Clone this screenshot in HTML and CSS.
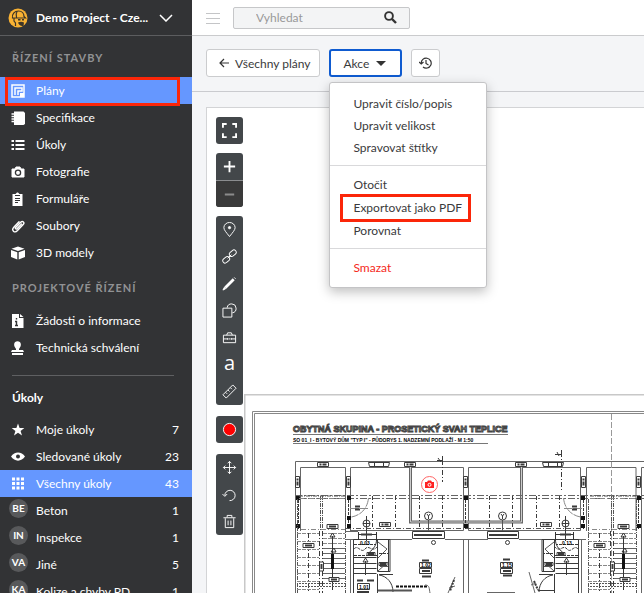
FILE: index.html
```html
<!DOCTYPE html>
<html lang="cs">
<head>
  <meta charset="UTF-8">
  <meta name="viewport" content="width=device-width, initial-scale=1.0">
  <title>Plány - Demo Project</title>
  <link rel="stylesheet" href="styles.css">
</head>
<body>

<aside class="sidebar">
  <button class="project">
    <svg class="logo" width="20" height="20" viewBox="0 0 20 20"><circle cx="10" cy="10" r="9.500" fill="#f9b233"/><path d="M4.500 10.500C3.500 6 6.500 3 10.500 3c3.500 0 5.500 2.500 5.500 5.500l1.500 1.500H5M6 10.500v2.500l1.500 2V18M9 3.500C8 5 8 7 8.500 9.500" fill="none" stroke="#3d3528" stroke-width="1.200"/><path d="M10 11h2.500v1.500H10zM14 11h2v1.500h-2zM10 14.500c2-1 4-1 6 0l-.5 3.500c-3 .5-4.500-1-5.500-3.500z" fill="#3d3528"/></svg>
    <span>Demo Project - Cze...</span>
    <svg width="14" height="8" viewBox="0 0 14 8"><path d="M1 1l6 6 6-6" fill="none" stroke="#fff" stroke-width="1.500"/></svg>
  </button>

  <h2 class="section">Řízení stavby</h2>
  <nav>
    <a href="#" class="item active marked"><svg class="icon" viewBox="0 0 14 14"><path d="M1 1h12v12H1z" fill="none" stroke="#fff" stroke-width="1.500"/><path d="M4 11V4h7v3H7v4" fill="none" stroke="#fff" stroke-width="1.500"/><path d="M9 9h4v4H9z" fill="#fff"/></svg>Plány</a>
    <a href="#" class="item"><svg class="icon" viewBox="0 0 14 14"><path d="M3 .5h9.500L14 2v11l-1.500 1H3z" fill="#fff"/><path d="M.5 3h3M.5 5.500h3M.5 8h3M.5 10.500h3" stroke="#fff" stroke-width="1.300"/></svg>Specifikace</a>
    <a href="#" class="item"><svg class="icon" viewBox="0 0 14 14"><path d="M.5 3H3M4.500 3h9M.5 7H3M4.500 7h9M.5 11H3M4.500 11h9" stroke="#fff" stroke-width="2.200"/></svg>Úkoly</a>
    <a href="#" class="item"><svg class="icon" viewBox="0 0 14 14"><path d="M1 4h3l1-2h4l1 2h3v8H1z" fill="#fff" stroke="#fff" stroke-linejoin="round"/><circle cx="7" cy="7.800" r="2.600" fill="none" stroke="#323335" stroke-width="1.300"/></svg>Fotografie</a>
    <a href="#" class="item"><svg class="icon" viewBox="0 0 14 14"><path d="M1.500 2h3L6 .5h1L8.500 2h3v12h-10z" fill="#fff"/><path d="M4 3.500h5M4 6.500h5M4 8.500h5M4 10.500h3" stroke="#323335"/></svg>Formuláře</a>
    <a href="#" class="item"><svg class="icon" viewBox="0 0 14 14"><path d="M10.500 5L6 9.700c-1 1-2.200-.2-1.300-1.200l5-5.200c2-2 4.300.3 2.500 2.300l-5.700 6c-3 3-6.500-.4-3.700-3.400L8 2.800" fill="none" stroke="#fff" stroke-width="1.400" stroke-linecap="round"/></svg>Soubory</a>
    <a href="#" class="item"><svg class="icon" viewBox="0 0 14 14"><path d="M7 .5l6.500 2.300L7 5 .5 2.800zM0 4l6.300 2.200v7.300L0 11zM14 4L7.700 6.200v7.300L14 11z" fill="#fff"/></svg>3D modely</a>
  </nav>

  <h2 class="section">Projektové řízení</h2>
  <nav>
    <a href="#" class="item"><svg class="icon" viewBox="0 0 14 14"><path d="M1 0h7v4h4.500v10H1z" fill="#fff"/><path d="M9 0l3.500 3H9z" fill="#fff"/><path d="M5.500 4v1.500M4 7.500h1.500V11M4 11.500h3" stroke="#323335" stroke-width="1.400" fill="none"/></svg>Žádosti o informace</a>
    <a href="#" class="item"><svg class="icon" viewBox="0 0 14 14"><path d="M5 8L3.500 5.500C1-1.500 12-1.500 9.500 5.500L8 8v1h4l1 2H0l1-2h4zM1 12h11v2H1z" fill="#fff"/></svg>Technická schválení</a>
  </nav>

  <hr>
  <h2 class="tasks-title">Úkoly</h2>
  <nav>
    <a href="#" class="item"><svg class="icon" viewBox="0 0 14 14"><path d="M7 .5l1.600 4.500h4.700L9.600 7.900l1.400 4.600-4-2.800-4 2.800 1.400-4.600L.7 5h4.700z" fill="#fff"/></svg>Moje úkoly<span class="count">7</span></a>
    <a href="#" class="item"><svg class="icon" viewBox="0 0 14 14"><path d="M0 6.500C3.500 1 10.500 1 14 6.500 10.500 12 3.500 12 0 6.500z" fill="#fff"/><circle cx="7" cy="6.500" r="2" fill="#323335"/></svg>Sledované úkoly<span class="count">23</span></a>
    <a href="#" class="item active"><svg class="icon" viewBox="0 0 14 14"><path d="M1 2h3M5.500 2h3M10 2h3M1 6.500h3M5.500 6.500h3M10 6.500h3M1 11h3M5.500 11h3M10 11h3" stroke="#fff" stroke-width="3"/></svg>Všechny úkoly<span class="count">43</span></a>
    <a href="#" class="item"><span class="badge">BE</span>Beton<span class="count">1</span></a>
    <a href="#" class="item"><span class="badge">IN</span>Inspekce<span class="count">1</span></a>
    <a href="#" class="item"><span class="badge">VA</span>Jiné<span class="count">5</span></a>
    <a href="#" class="item"><span class="badge">KA</span>Kolize a chyby PD<span class="count">1</span></a>
  </nav>
</aside>

<main class="main">
  <header class="topbar">
    <button class="burger" aria-label="Menu"><svg width="14" height="12" viewBox="0 0 14 12"><path d="M0 1.500h14M0 6.500h14M0 11.500h14" stroke="#c4c5c7"/></svg></button>
    <label class="search">
      <input type="text" placeholder="Vyhledat" aria-label="Vyhledat">
      <svg width="13" height="13" viewBox="0 0 13 13"><circle cx="5" cy="5" r="3.900" fill="none" stroke="#333" stroke-width="1.900"/><path d="M8 8l4 4" stroke="#333" stroke-width="2.400"/></svg>
    </label>
  </header>

  <div class="toolbar">
    <button class="btn"><svg width="10" height="10" viewBox="0 0 10 10"><path d="M10 5H1M5 1L1 5l4 4" fill="none" stroke="#333" stroke-width="1.200"/></svg>Všechny plány</button>
    <div class="dropdown">
      <button class="btn focused">Akce<svg width="10" height="5" viewBox="0 0 10 5"><path d="M0 0h10L5 5z" fill="#333"/></svg></button>
      <div class="menu">
        <div class="group">
          <a href="#">Upravit číslo/popis</a>
          <a href="#">Upravit velikost</a>
          <a href="#">Spravovat štítky</a>
        </div>
        <div class="group">
          <a href="#">Otočit</a>
          <a href="#" class="export">Exportovat jako PDF</a>
          <a href="#">Porovnat</a>
        </div>
        <div class="group">
          <a href="#" class="danger">Smazat</a>
        </div>
      </div>
    </div>
    <button class="btn history" aria-label="Historie"><svg width="13" height="12" viewBox="0 0 13 12"><path d="M2.200 6.500A5 5 0 1 1 4 10M0 5l2.200 2L4.500 5M7 3v3.500l2.500 1.500" fill="none" stroke="#333" stroke-width="1.200"/></svg></button>
  </div>

  <section class="canvas">
    <div class="tools">
      <div class="tool-group">
        <button aria-label="Celá obrazovka"><svg viewBox="0 0 16 16"><path d="M1 5V1h4M11 1h4v4M15 11v4h-4M5 15H1v-4" stroke-width="2"/></svg></button>
      </div>
      <div class="tool-group">
        <button aria-label="Přiblížit"><svg viewBox="0 0 16 16"><path d="M8 2v12M2 8h12" stroke-width="2"/></svg></button>
        <button class="off" aria-label="Oddálit"><svg viewBox="0 0 16 16"><path d="M3 8h10" stroke="#8b8b8b" stroke-width="2"/></svg></button>
      </div>
      <div class="tool-group wide">
        <button aria-label="Úkol"><svg viewBox="0 0 16 16"><path d="M8 15.500C4.500 11 2 8.500 2 6a6 5.500 0 0 1 12 0c0 2.500-2.500 5-6 9.500z"/><circle cx="8" cy="6" r="1.200" fill="#fff"/></svg></button>
        <button aria-label="Odkaz"><svg viewBox="0 0 16 16"><rect x="-4" y="-2.500" width="8" height="5" rx="2.500" transform="translate(11.500 4.500) rotate(-40)"/><rect x="-4" y="-2.500" width="8" height="5" rx="2.500" transform="translate(4.500 11.500) rotate(-40)"/><path d="M6 10l4-4"/></svg></button>
        <button aria-label="Tužka"><svg viewBox="0 0 16 16"><path d="M3.500 12.500l9-9" stroke-width="3"/><path d="M1 15l1.500-3 1.500 1.500zM13 1.500l1.500 1.500" fill="#fff"/></svg></button>
        <button aria-label="Tvary"><svg viewBox="0 0 16 16"><path d="M1 5.500h9.500V15H1zM5.500 5a4.800 4.800 0 1 1 5.500 5.500"/></svg></button>
        <button aria-label="Razítko"><svg viewBox="0 0 16 16"><path d="M1.500 5.500h13v8h-13zM5 5.500L6 3h4l1 2.500M1.500 9.500h4M7 9.500h2M10.500 9.500h4M6 8.500v2M10 8.500v2"/></svg></button>
        <button class="letter" aria-label="Text">a</button>
        <button aria-label="Měřit"><svg viewBox="0 0 16 16"><path d="M1 11.500L11.500 1 15 4.500 4.500 15zM4 9l1.500 1.500M6.500 6.500L8 8M9 4l1.500 1.500"/></svg></button>
      </div>
      <div class="tool-group wide">
        <button aria-label="Barva"><svg viewBox="0 0 16 16"><circle cx="8" cy="8" r="6.500" fill="#f00"/></svg></button>
      </div>
      <div class="tool-group">
        <button aria-label="Posunout"><svg viewBox="0 0 16 16"><path d="M8 1.500v13M1.500 8h13M6 3.500l2-2 2 2M6 12.500l2 2 2-2M3.500 6l-2 2 2 2M12.500 6l2 2-2 2"/></svg></button>
        <button aria-label="Zpět"><svg viewBox="0 0 16 16"><path d="M3 9a5.500 5.500 0 1 1 5 5.500M.5 7.500L3 10l2.500-2.500"/></svg></button>
        <button aria-label="Smazat"><svg viewBox="0 0 16 16"><path d="M3.500 4.500v10h9v-10M1.500 4h13M5.500 3.500V1.500h5v2M6.500 7v5M9.500 7v5"/></svg></button>
      </div>
    </div>

    <!-- výkres půdorysu -->
    <svg class="plan" width="400" height="199" viewBox="244 394 400 199">
      <defs>
        <!-- schodiště -->
        <g id="stairs">
          <path d="M297.500 499v94M345.500 499v94M299 496h46M320.500 496v35M322.500 496v35" stroke="#555" stroke-dasharray="4 1 1 1"/>
          <path d="M297 533.500h22M297 541.500h22M297 549.500h22M297 557.500h22M297 565.500h22M297 573.500h22M297 581.500h22M297 589.500h22M323 533.500h22M323 538.500h22M323 543.500h22" stroke-dasharray="4 1" stroke="#888"/>
          <path d="M322 548.500h23M322 553.500h23M322 558.500h23M322 563.500h23M322 568.500h23M322 573.500h23M322 578.500h23" stroke="#666"/>
          <path d="M319.500 531v62M322.500 531v62M308.500 533v60" stroke-dasharray="5 2 1 2"/>
          <path d="M332.500 536v54M330 537l2.500-4 2.500 4zM331 552l3-4 2 4z" stroke="#333"/>
          <path d="M332.500 554v15" stroke="#111" stroke-width="3"/>
          <path d="M299 583.500h46M299 586.500h46" stroke="#555" stroke-dasharray="2 1"/>
          <path d="M301 529.500h44M299 498.500h46" stroke="#888" stroke-dasharray="5 2 1 2"/>
          <path d="M303 543.500h11v4h-11zM327 524.500h11v4h-11zM329 577.500h10v4h-10zM319.500 562h4v9h-4z" fill="#fff"/>
          <path d="M305 545.500h7M329 526.500h7M331 579.500h6M321.500 564v5" stroke-width="2"/>
        </g>
        <!-- vstup s koupelnou -->
        <g id="entry">
          <path d="M353.500 593v-53.500h36.500v32h-12.500v-32M353.500 557.500h23M353.500 563.500h23M353.500 568.500h23M353.500 573.500h23M377.500 574v19M388.500 540v31M379 574.500h14M393 592c0-9-6-16-14-17M378 590.500h16"/>
          <path d="M354 549c4-5 7 5 11 0s7 4 12-2M354 555.500h23M379 553.500h10M354 544.500h22" stroke-dasharray="3 1"/>
          <path d="M378 542l9 7-9 9M380 566.500h8M378 571l10-9" stroke="#555"/>
          <path d="M365.500 561v14M363 562l2.500-4 2.500 4z"/>
          <path d="M358.500 534.500h18M358.500 532v8M376.500 532v8M376.500 540c0 5-3 9-7 12" stroke="#333"/>
          <path d="M361 534.500h11" stroke-width="2"/>
          <path d="M366.500 527v14"/>
          <circle cx="366.500" cy="523.500" r="3.500" fill="#fff"/>
          <path d="M363 523.500h7M366.500 516v14"/>
          <path d="M367 552.500h8v3h-8zM379 562.500h8v3h-8z" fill="#fff"/>
          <path d="M368 554h6M380 564h6" stroke-width="2"/>
          <path d="M368.500 498c-1 10-7 17-17 19M350 508.500h18" stroke="#888" stroke-dasharray="9 1"/>
          <path d="M355 506.500h5M355 509.500h5" stroke-width="2"/>
        </g>
        <!-- výšková kóta -->
        <g id="mark"><path d="M0 0h11v4H0z" fill="#fff"/><path d="M2 2h2M5 2h4" stroke-width="2"/></g>
        <g id="mark-v"><path d="M0 0h4v11H0z" fill="#fff"/><path d="M2 2v2M2 5v4" stroke-width="2"/></g>
      </defs>

      <path d="M244.500 593V394.500H644" fill="none" stroke="#c8c8c8" stroke-width="2"/>
      <path d="M252.500 593V411.500H644M254.500 593V413.500H644" fill="none" stroke="#888"/>

      <text class="plan-title" x="293" y="432">OBYTNÁ SKUPINA - PROSETICKÝ SVAH TEPLICE</text>
      <path d="M293 434.500h215M293 443.500h195" stroke="#777"/>
      <text class="plan-sub" x="293" y="442">SO 01_I - BYTOVÝ DŮM "TYP I" - PŮDORYS 1. NADZEMNÍ PODLAŽÍ - M 1:50</text>

      <g fill="none" stroke="#3a3a3a">
        <!-- obvodové zdi -->
        <g stroke="#666">
          <path d="M295.500 593V461.500H644M300.500 531V467.500H345.500V532M350.500 531V467.500H463.500V530.500H350M468.500 530.500V467.500H580.500V530.500zM586.500 531V467.500H636V531M641.500 593V467.500H644"/>
          <path d="M345 539.500h14M377 539.500h35M445 539.500h43M519 539.500h36M573 539.500h13M463.500 539v54M468.500 539v54M350.500 593v-53M581.500 593v-53M345 531.500h13"/>
        </g>
        <path d="M410.500 467v55h111v-55" stroke="#666" stroke-width="3"/>
        <path d="M410.500 467v55h111v-55" stroke="#ccc"/>
        <!-- trámy -->
        <path d="M295 495.500h349M295 498.500h349" stroke="#666" stroke-dasharray="7 2 2 2"/>
        <path d="M346 528.500h238" stroke="#555" stroke-dasharray="5 2 1 2"/>
        <path d="M372.500 496v33M395.500 496v33M419.500 496v33M442.500 496v33M489.500 496v33M512.500 496v33M536.500 496v33M559.500 496v33" stroke-dasharray="4 2 1 2"/>
        <path d="M348.500 496v33M465.500 496v33M583.500 496v33M638.500 496v33M298.500 496v33" stroke-dasharray="3 1"/>
        <path d="M611.500 414v179" stroke="#999" stroke-dasharray="6 2"/>
        <path d="M442.500 460v22M561.500 452v38" stroke-dasharray="5 2 1 2"/>
        <path d="M437 460.500h5M438 458l3 4M442.500 456v5M555 454.500h6M557 452l2 4M561.500 450v5"/>
        <!-- okna -->
        <path d="M368.500 462.500h21l-1 4h-19zM374.500 463v4M383.500 463v4M542.500 462.500h21l-1 4h-19zM548.500 463v4M557.500 463v4"/>
        <path d="M412.500 531.500h32v7h-32zM487.500 531.500h31v7h-31z" fill="#fff"/>
        <path d="M414 535h28M489 535h28" stroke-width="2"/>
        <!-- sloupy -->
        <path d="M347 498h4M347 518h4M347 526h4M296 498h4M296 526h4M464 498h4M464 526h4M581 498h4M581 518h4M581 526h4M637 498h4M637 526h4" stroke="#111" stroke-width="4"/>

        <use href="#stairs"/>
        <use href="#stairs" x="291"/>
        <use href="#entry"/>
        <use href="#entry" transform="translate(932 0) scale(-1 1)"/>

        <use href="#mark" x="317.500" y="462.500"/>
        <use href="#mark" x="404.500" y="462.500"/>
        <use href="#mark" x="515.500" y="462.500"/>
        <use href="#mark" x="379.500" y="522.500"/>
        <use href="#mark" x="540.500" y="522.500"/>
        <use href="#mark-v" x="295.500" y="476.500"/>
        <use href="#mark-v" x="346.500" y="476.500"/>
        <use href="#mark-v" x="463.500" y="476.500"/>
        <use href="#mark-v" x="581.500" y="476.500"/>
        <use href="#mark-v" x="636.500" y="476.500"/>

        <path d="M428.500 519v12M502.500 519v12" stroke="#555"/>
        <circle cx="428.500" cy="516" r="4" fill="#fff"/>
        <circle cx="502.500" cy="516" r="4" fill="#fff"/>
        <path d="M427 514l1.500 2 1.500-2M428.500 516v3M501 514l1.500 2 1.500-2M502.500 516v3"/>
        <circle cx="433.500" cy="542.500" r="2"/>
        <circle cx="507.500" cy="542.500" r="2"/>

        <!-- čísla místností -->
        <path d="M419.500 562.500h12v5h-12zM419.500 568.500h12v5h-12zM500.500 562.500h12v5h-12zM500.500 568.500h12v5h-12zM357.500 583.500h12v6h-12z" fill="#fff"/>
        <path d="M422 560.500h7M422 571h8M422 576.500h9M503 559.500h7M503 571h8M503 575.500h9M357 580.500h6M367 580.500h7M357 592h12" stroke-width="2"/>
        <path d="M396 586.500h32" stroke="#111" stroke-width="2" stroke-dasharray="3 1"/>
        <path d="M378 590.500h34" stroke="#555" stroke-width="2"/>
        <path d="M425 585c5 0 4 4 5 8M529 572l6 21M455 577l-7 16M531 585l5-2M449 588l6-2M487 592.500h28" stroke="#666"/>
        <path d="M534 581l4 9M454 580l-4 11" stroke-width="2" stroke-dasharray="2 1"/>
      </g>
      <g class="plan-no">
        <text x="421" y="567">1.02</text>
        <text x="502" y="567">1.15</text>
        <text x="359" y="589">1.01</text>
        <text x="360" y="545">0.03</text>
        <text x="562" y="545">0.13</text>
      </g>

      <circle cx="429.500" cy="484.500" r="8" fill="#fff" stroke="#f66"/>
      <path d="M425 482h2l1-1.500h3l1 1.500h2v6h-9z" fill="#f22"/>
      <circle cx="429.500" cy="484.800" r="1.500" fill="none" stroke="#fff"/>
    </svg>
  </section>
</main>

</body>
</html>
```

FILE: styles.css
```css
* { box-sizing: border-box; }
body { margin: 0; display: flex; height: 100vh; overflow: hidden; font-family: Lato, sans-serif; font-size: 12px; color: #3a3a3c; background-color: #f4f5f7; }
button { font: inherit; color: inherit; margin: 0; padding: 0; border: none; background: none; cursor: pointer; }
a { color: inherit; text-decoration: none; }
h2 { margin: 0; }

.sidebar { flex: none; width: 192px; overflow: hidden; background-color: #323335; color: #fff; }
.project { display: flex; align-items: center; width: 100%; height: 36px; padding: 0 19px 0 8px; border-bottom: 1px solid #5c5d5f; font-weight: bold; text-align: left; }
.project .logo { margin-right: 8px; }
.project span { flex: 1; white-space: nowrap; }
.section { height: 41px; padding-left: 12px; font-size: 11px; line-height: 44px; letter-spacing: 1px; text-transform: uppercase; white-space: nowrap; color: #919294; }
.item { position: relative; display: flex; align-items: center; height: 27px; padding: 0 13px 0 11px; white-space: nowrap; }
.item.active { background-color: #6597ff; }
.icon { width: 14px; height: 14px; margin-right: 11px; }
.count { margin-left: auto; }
.badge { width: 19px; height: 19px; margin: 0 8px 4px -2px; border-radius: 50%; background-color: #58595b; font-size: 10px; font-weight: bold; line-height: 19px; text-align: center; }
.marked::after { content: ""; position: absolute; top: 0; right: 12px; bottom: -2px; left: 5px; border: 3px solid #fb2609; z-index: 1; }
hr { margin: 14px 18px 0 12px; border: none; border-top: 1px solid #5f6062; }
.tasks-title { height: 40px; padding-left: 12px; font-size: 12px; line-height: 44px; }

.main { flex: 1; min-width: 0; display: flex; flex-direction: column; }
.topbar { flex: none; display: flex; align-items: center; gap: 13px; height: 36px; padding: 0 14px; border-bottom: 1px solid #cacbcd; background-color: #fff; }
.burger { display: flex; }
.search { display: flex; align-items: center; width: 177px; height: 22px; padding: 0 12px 0 22px; border: 1px solid #c6c7c9; border-radius: 2px; background-color: #f3f4f5; }
.search input { flex: 1; min-width: 0; padding: 0; border: none; outline: none; background: none; font: inherit; }
.search input::placeholder { color: #999; }

.toolbar { flex: none; display: flex; gap: 9px; height: 56px; padding: 13px 14px; border-bottom: 1px solid #cacbcf; }
.btn { display: flex; align-items: center; gap: 6px; height: 28px; padding: 0 9px 0 12px; border: 1px solid #cbccce; border-radius: 3px; background-color: #fff; white-space: nowrap; }
.btn.focused { gap: 7px; padding: 0 14px 0 12px; border: 2px solid #0f5bd0; }
.btn.history { padding: 0 7px; }
.dropdown { position: relative; }
.menu { position: absolute; top: 33px; left: 0; z-index: 2; width: 158px; padding-top: 2px; border: 1px solid #c4c4c6; border-radius: 3px; background-color: #fff; box-shadow: 0 4px 12px rgba(0, 0, 0, 0.25); }
.group { padding: 8px 0 6px; }
.group + .group { border-top: 1px solid #d9d9db; }
.group:last-child { padding-bottom: 8px; }
.group a { position: relative; display: block; padding-left: 23px; line-height: 22px; white-space: nowrap; }
.group .export { line-height: 24px; }
.export::after { content: ""; position: absolute; top: -2px; right: 15px; bottom: -2px; left: 10px; border: 3px solid #fb2609; }
.group .danger { color: #f52a1c; }

.canvas { position: relative; flex: 1; min-height: 0; margin: 15px 0 0 14px; padding: 9px; border: 1px solid #d3d4d6; border-width: 1px 0 0 1px; background-color: #fff; overflow: hidden; }
.tools { display: flex; flex-direction: column; gap: 9px; width: 27px; }
.tool-group { border-radius: 3px; background-color: #43474a; overflow: hidden; }
.tool-group.wide { margin-bottom: 2px; }
.tool-group button { display: flex; align-items: center; justify-content: center; width: 27px; height: 27px; color: #fff; }
.tool-group svg { width: 15px; height: 15px; fill: none; stroke: #fff; }
.tool-group .off { border-top: 1px solid #8b8d8f; background-color: #3a3a3a; }
.tool-group .letter { font: 20px "Open Sans", sans-serif; line-height: 22px; padding-bottom: 4px; }
.plan { position: absolute; top: 286px; left: 37px; }
.plan-title { font: bold 9px "Liberation Sans", sans-serif; fill: #ddd; stroke: #444; stroke-width: 1px; }
.plan-sub { font: bold 5px "Liberation Sans", sans-serif; fill: #000; }
.plan-no { font: bold 5px "Liberation Sans", sans-serif; fill: #000; }
```
